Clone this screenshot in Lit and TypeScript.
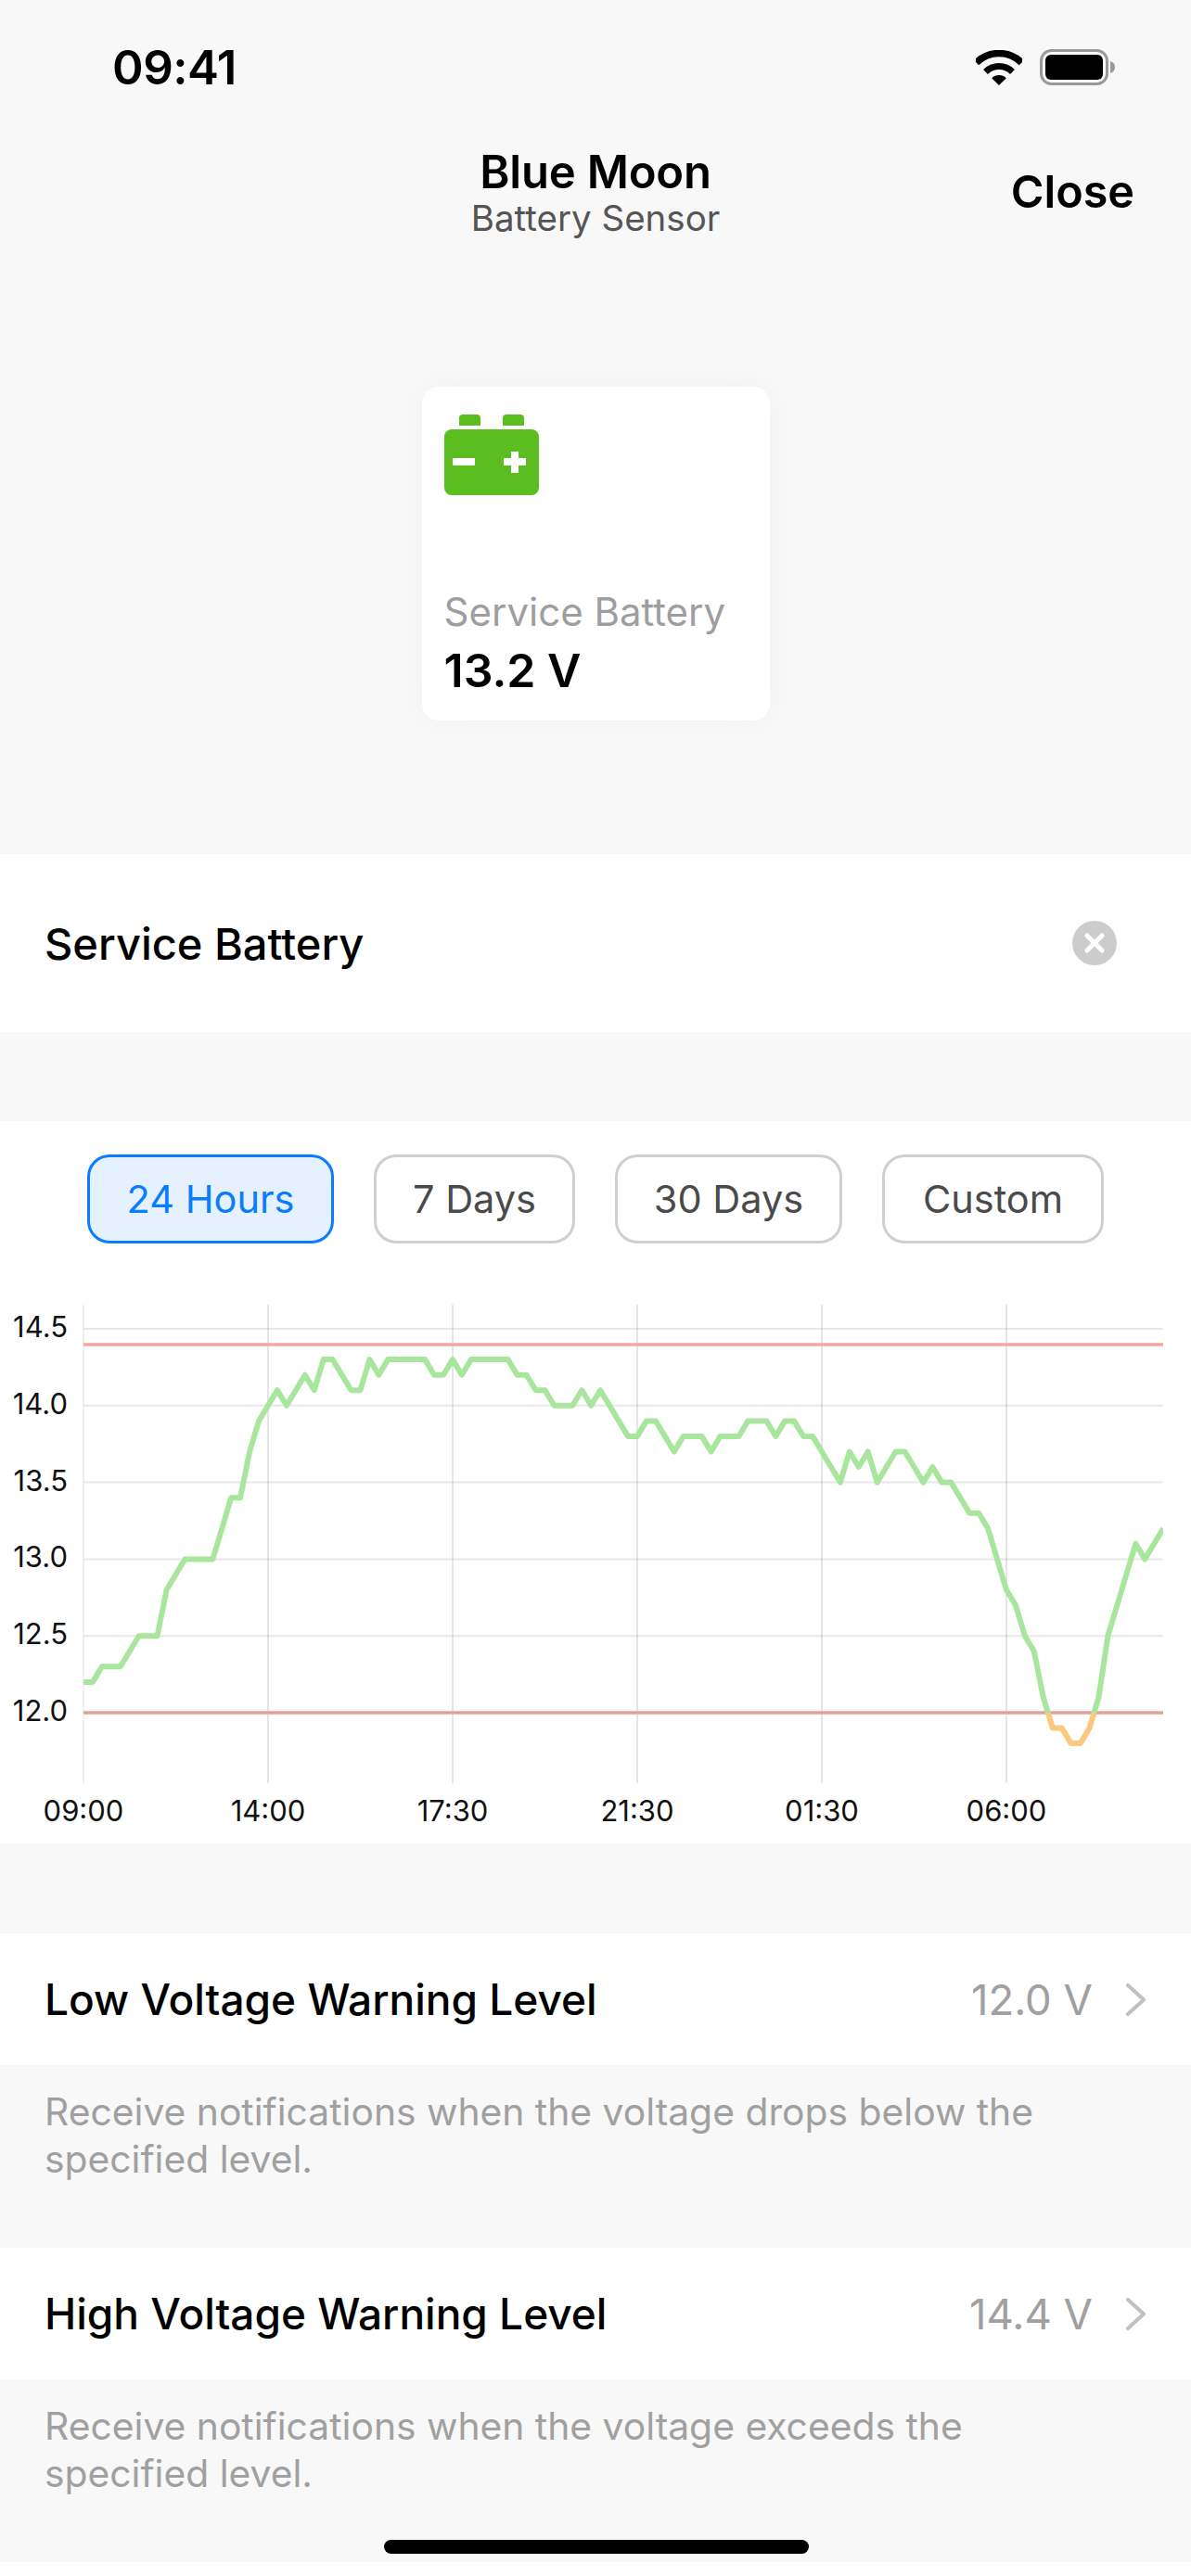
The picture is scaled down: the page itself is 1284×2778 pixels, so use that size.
import { LitElement, html, css, svg } from 'lit'
import { customElement } from 'lit/decorators.js'

// voltage samples, one every 9.95px on the chart
const samples = [
  12.2, 12.2, 12.3, 12.3, 12.3, 12.4, 12.5, 12.5, 12.5, 12.8, 12.9, 13.0, 13.0, 13.0, 13.0, 13.2, 13.4, 13.4, 13.7, 13.9,
  14.0, 14.1, 14.0, 14.1, 14.2, 14.1, 14.3, 14.3, 14.2, 14.1, 14.1, 14.3, 14.2, 14.3, 14.3, 14.3, 14.3, 14.3, 14.2, 14.2,
  14.3, 14.2, 14.3, 14.3, 14.3, 14.3, 14.3, 14.2, 14.2, 14.1, 14.1, 14.0, 14.0, 14.0, 14.1, 14.0, 14.1, 14.0, 13.9, 13.8,
  13.8, 13.9, 13.9, 13.8, 13.7, 13.8, 13.8, 13.8, 13.7, 13.8, 13.8, 13.8, 13.9, 13.9, 13.9, 13.8, 13.9, 13.9, 13.8, 13.8,
  13.7, 13.6, 13.5, 13.7, 13.6, 13.7, 13.5, 13.6, 13.7, 13.7, 13.6, 13.5, 13.6, 13.5, 13.5, 13.4, 13.3, 13.3, 13.2, 13.0,
  12.8, 12.7, 12.5, 12.4, 12.1, 11.9, 11.9, 11.8, 11.8, 11.9, 12.1, 12.5, 12.7, 12.9, 13.1, 13.0, 13.1, 13.2,
]

const LEFT = 90
const RIGHT = 1254
const yFor = (v: number) => 1847 - (v - 12) * 165.6

const ranges = ['24 Hours', '7 Days', '30 Days', 'Custom']
const yTicks = [14.5, 14.0, 13.5, 13.0, 12.5, 12.0]
const xTicks = ['09:00', '14:00', '17:30', '21:30', '01:30', '06:00']

@customElement('app-root')
export class AppRoot extends LitElement {
  static styles = css`
    :host {
      display: block;
      position: relative;
      width: 1284px;
      background: #f8f8f8;
      font-family: Inter, 'Liberation Sans', sans-serif;
      color: #000;
    }

    .status {
      height: 145px;
      padding: 0 82px 0 121px;
      display: flex;
      align-items: center;
      justify-content: space-between;
      box-sizing: border-box;
    }

    .time {
      font-size: 51px;
      line-height: 60px;
      font-weight: 600;
      letter-spacing: -0.5px;
    }

    .status-icons {
      display: flex;
      align-items: center;
      gap: 19px;
    }

    .status-icons svg {
      display: block;
    }

    .nav {
      height: 272px;
      padding-top: 15px;
      box-sizing: border-box;
      display: grid;
      grid-template-columns: 1fr auto 1fr;
    }

    .title {
      grid-column: 2;
      text-align: center;
    }

    .title-main {
      font-size: 49px;
      line-height: 52px;
      font-weight: 600;
      letter-spacing: -0.2px;
    }

    .title-sub {
      font-size: 38.5px;
      line-height: 46px;
      color: #555;
    }

    .close {
      grid-column: 3;
      justify-self: end;
      padding: 21px 61px 0 0;
      font-size: 48.5px;
      line-height: 52px;
      font-weight: 600;
    }

    .card {
      width: 375px;
      height: 360px;
      margin: 0 auto 144px;
      padding: 30px 24px 28px;
      box-sizing: border-box;
      border-radius: 18px;
      background: #fff;
      box-shadow: 0 0 30px rgba(0, 0, 0, 0.035);
      display: flex;
      flex-direction: column;
      justify-content: space-between;
    }

    .card svg {
      display: block;
    }

    .card-label {
      font-size: 42px;
      line-height: 46px;
      color: #9e9e9e;
    }

    .card-value {
      margin-top: 14px;
      font-size: 50px;
      line-height: 52px;
      font-weight: 600;
    }

    .name-row {
      height: 192px;
      padding: 0 80px 0 48px;
      background: #fff;
      display: flex;
      align-items: center;
      justify-content: space-between;
      font-size: 47px;
      font-weight: 500;
    }

    .chart-panel {
      margin-top: 96px;
      height: 779px;
      padding-top: 36px;
      box-sizing: border-box;
      background: #fff;
    }

    .ranges {
      display: grid;
      grid-template-columns: 266px 217px 245px 239px;
      column-gap: 43px;
      padding-left: 94px;
    }

    .range {
      height: 96px;
      box-sizing: border-box;
      border: 3px solid #cfcfcf;
      border-radius: 24px;
      display: flex;
      align-items: center;
      justify-content: center;
      font-size: 41.5px;
      color: #4a4a4a;
    }

    .range.active {
      border-color: #0a7cff;
      background: #e5f1ff;
      color: #0a7cff;
    }

    .chart {
      display: block;
      margin-top: 59px;
    }

    .chart text {
      font-size: 31px;
      fill: #111;
    }

    .row {
      margin-top: 97px;
      height: 142px;
      padding: 0 48px;
      background: #fff;
      display: flex;
      align-items: center;
      font-size: 46px;
      font-weight: 500;
    }

    .row + .hint + .row {
      margin-top: 0;
    }

    .row-label {
      flex: 1;
    }

    .row-value {
      font-size: 45.5px;
      font-weight: 400;
      color: #a0a0a0;
    }

    .row svg {
      margin-left: 35px;
      display: block;
    }

    .hint {
      height: 197px;
      padding: 25px 100px 0 48px;
      box-sizing: border-box;
      font-size: 40.8px;
      line-height: 51px;
      color: #a0a0a0;
    }

    .home-bar {
      position: absolute;
      left: 414px;
      bottom: 9px;
      width: 458px;
      height: 15px;
      border-radius: 8px;
      background: #000;
    }
  `

  renderChart() {
    const points = samples.map((v, i) => `${(LEFT + i * 9.95).toFixed(1)},${yFor(v).toFixed(1)}`).join(' ')
    return html`
      <svg class="chart" width="1284" height="587" viewBox="0 1400 1284 587">
        <defs>
          <clipPath id="above"><rect x="${LEFT}" y="1400" width="${RIGHT - LEFT}" height="447"></rect></clipPath>
          <clipPath id="below"><rect x="${LEFT}" y="1847" width="${RIGHT - LEFT}" height="100"></rect></clipPath>
        </defs>
        ${yTicks.map((v) => {
          const y = yFor(v)
          return svg`
            ${v !== 12 ? svg`<line x1="${LEFT}" x2="${RIGHT}" y1="${y}" y2="${y}" stroke="#e8e8e8" stroke-width="2"></line>` : ''}
            <text x="73" y="${y + 9}" text-anchor="end">${v.toFixed(1)}</text>`
        })}
        ${xTicks.map((t, i) => {
          const x = LEFT + i * 199
          return svg`
            <line x1="${x}" x2="${x}" y1="1407" y2="1923" stroke="rgba(0,0,0,${i === 0 ? 0.06 : 0.1})" stroke-width="2"></line>
            <text x="${x}" y="1964" text-anchor="middle">${t}</text>`
        })}
        <line x1="${LEFT}" x2="${RIGHT}" y1="1450" y2="1450" stroke="#efa9a3" stroke-width="3.5"></line>
        <line x1="${LEFT}" x2="${RIGHT}" y1="1847" y2="1847" stroke="#e4a096" stroke-width="3.5"></line>
        <polyline points="${points}" fill="none" stroke="#a9e69d" stroke-width="6" stroke-linejoin="round" clip-path="url(#above)"></polyline>
        <polyline points="${points}" fill="none" stroke="#fac87e" stroke-width="6" stroke-linejoin="round" clip-path="url(#below)"></polyline>
      </svg>
    `
  }

  renderRow(label: string, value: string, hint: string) {
    return html`
      <div class="row">
        <span class="row-label">${label}</span>
        <span class="row-value">${value}</span>
        <svg width="23" height="35" viewBox="0 0 23 35">
          <path d="M3 2 L20 17.5 L3 33" fill="none" stroke="#c0c0c0" stroke-width="4" stroke-linecap="round" stroke-linejoin="round"></path>
        </svg>
      </div>
      <div class="hint">${hint}</div>
    `
  }

  render() {
    return html`
      <div class="status">
        <span class="time">09:41</span>
        <div class="status-icons">
          <svg width="50" height="38" viewBox="0 0 50 38">
            <path d="M0.6 13.6 A34.5 34.5 0 0 1 49.4 13.6" fill="none" stroke="#000" stroke-width="7.5"></path>
            <path d="M10.5 23.5 A20.5 20.5 0 0 1 39.5 23.5" fill="none" stroke="#000" stroke-width="7"></path>
            <path d="M25 38 L17.2 30.2 A11 11 0 0 1 32.8 30.2 Z" fill="#000"></path>
          </svg>
          <svg width="81" height="39" viewBox="0 0 81 39">
            <rect x="1.5" y="1.5" width="71" height="36" rx="11" fill="none" stroke="#999" stroke-width="3"></rect>
            <rect x="6" y="6" width="62" height="27" rx="6" fill="#000"></rect>
            <path d="M76 13 C79 14 81 16 81 19.5 C81 23 79 25 76 26 Z" fill="#999"></path>
          </svg>
        </div>
      </div>

      <div class="nav">
        <div class="title">
          <div class="title-main">Blue Moon</div>
          <div class="title-sub">Battery Sensor</div>
        </div>
        <div class="close">Close</div>
      </div>

      <div class="card">
        <svg width="102" height="87" viewBox="0 0 102 87">
          <path d="M16 12 V4 a4 4 0 0 1 4 -4 H35 a4 4 0 0 1 4 4 V12 Z" fill="#5cbd20"></path>
          <path d="M63 12 V4 a4 4 0 0 1 4 -4 H82 a4 4 0 0 1 4 4 V12 Z" fill="#5cbd20"></path>
          <rect x="0" y="16" width="102" height="71" rx="8" fill="#5cbd20"></rect>
          <rect x="9" y="47" width="24" height="8" fill="#fff"></rect>
          <rect x="64" y="47" width="24" height="8" fill="#fff"></rect>
          <rect x="72" y="40" width="8" height="23" fill="#fff"></rect>
        </svg>
        <div>
          <div class="card-label">Service Battery</div>
          <div class="card-value">13.2 V</div>
        </div>
      </div>

      <div class="name-row">
        <span>Service Battery</span>
        <svg width="48" height="48" viewBox="0 0 48 48">
          <circle cx="24" cy="24" r="24" fill="#ccc"></circle>
          <path d="M16 16 L32 32 M32 16 L16 32" stroke="#fff" stroke-width="5" stroke-linecap="round"></path>
        </svg>
      </div>

      <div class="chart-panel">
        <div class="ranges">
          ${ranges.map((r, i) => html`<div class="range ${i === 0 ? 'active' : ''}">${r}</div>`)}
        </div>
        ${this.renderChart()}
      </div>

      ${this.renderRow('Low Voltage Warning Level', '12.0 V', 'Receive notifications when the voltage drops below the specified level.')}
      ${this.renderRow('High Voltage Warning Level', '14.4 V', 'Receive notifications when the voltage exceeds the specified level.')}

      <div class="home-bar"></div>
    `
  }
}
